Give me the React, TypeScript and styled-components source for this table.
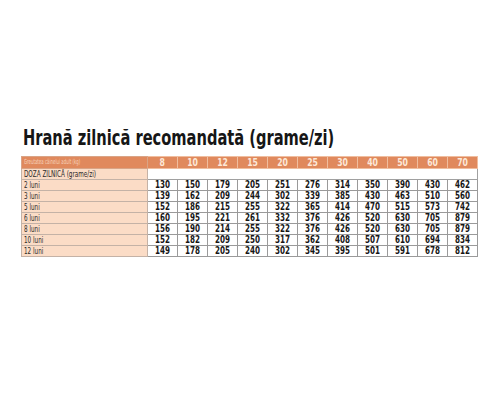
import styled, { createGlobalStyle } from 'styled-components';

const weights = [8, 10, 12, 15, 20, 25, 30, 40, 50, 60, 70];

const rows: { label: string; values: number[] }[] = [
  { label: '2 luni', values: [130, 150, 179, 205, 251, 276, 314, 350, 390, 430, 462] },
  { label: '3 luni', values: [139, 162, 209, 244, 302, 339, 385, 430, 463, 510, 560] },
  { label: '5 luni', values: [152, 186, 215, 255, 322, 365, 414, 470, 515, 573, 742] },
  { label: '6 luni', values: [160, 195, 221, 261, 332, 376, 426, 520, 630, 705, 879] },
  { label: '8 luni', values: [156, 190, 214, 255, 322, 376, 426, 520, 630, 705, 879] },
  { label: '10 luni', values: [152, 182, 209, 250, 317, 362, 408, 507, 610, 694, 834] },
  { label: '12 luni', values: [149, 178, 205, 240, 302, 345, 395, 501, 591, 678, 812] },
];

const GlobalStyle = createGlobalStyle`
  html, body {
    margin: 0;
    padding: 0;
    background: #ffffff;
  }
`;

export default function App() {
  return (
    <Page>
      <GlobalStyle />
      <Title>
        <Squeeze $scale={0.74}>Hrană zilnică recomandată (grame/zi)</Squeeze>
      </Title>
      <Table>
        <colgroup>
          <col style={{ width: 126 }} />
          {weights.map((w) => (
            <col key={w} />
          ))}
        </colgroup>
        <tbody>
          <tr>
            <HeadLabel>
              <Squeeze $scale={0.62}>Greutatea câinelui adult (kg)</Squeeze>
            </HeadLabel>
            {weights.map((w) => (
              <HeadCell key={w}>
                <Squeeze $scale={0.82} $center>
                  {w}
                </Squeeze>
              </HeadCell>
            ))}
          </tr>
          <tr>
            <LabelCell>
              <Squeeze $scale={0.7}>DOZA ZILNICĂ (grame/zi)</Squeeze>
            </LabelCell>
            <EmptyCell colSpan={weights.length} />
          </tr>
          {rows.map((row) => (
            <tr key={row.label}>
              <LabelCell>
                <Squeeze $scale={0.7}>{row.label}</Squeeze>
              </LabelCell>
              {row.values.map((v, i) => (
                <NumCell key={i}>
                  <Squeeze $scale={0.8} $center>
                    {v}
                  </Squeeze>
                </NumCell>
              ))}
            </tr>
          ))}
        </tbody>
      </Table>
    </Page>
  );
}

const Page = styled.div`
  width: 500px;
  height: 400px;
  padding: 126px 0 0 21px;
  box-sizing: border-box;
  font-family: 'Liberation Sans Narrow', 'DejaVu Sans Condensed', 'Liberation Sans', sans-serif;
`;

const Squeeze = styled.span<{ $scale: number; $center?: boolean }>`
  display: inline-block;
  white-space: nowrap;
  transform: scaleX(${(p) => p.$scale});
  transform-origin: ${(p) => (p.$center ? 'center' : 'left')} center;
`;

const Title = styled.h1`
  margin: 0 0 7px 2px;
  font-size: 22px;
  line-height: 23px;
  font-weight: 700;
  color: #161616;
  white-space: nowrap;
`;

const Table = styled.table`
  width: 457px;
  table-layout: fixed;
  border-collapse: collapse;
`;

const HeadLabel = styled.td`
  height: 11px;
  padding: 0 0 0 2px;
  background: #e0895d;
  color: #f7d3bc;
  font-size: 7px;
  line-height: 11px;
  border: 1px solid #d9a486;
  overflow: hidden;
`;

const HeadCell = styled.td`
  height: 11px;
  padding: 0;
  background: #e0895d;
  color: #fde8d8;
  font-size: 10.5px;
  font-weight: 700;
  line-height: 11px;
  text-align: center;
  border: 1px solid #f0bd9e;
`;

const LabelCell = styled.td`
  height: 10px;
  padding: 0 0 0 2px;
  background: #fbdcc6;
  color: #2a2a2a;
  font-size: 9px;
  line-height: 10px;
  border: 1px solid #c4b2a6;
  overflow: hidden;
`;

const EmptyCell = styled.td`
  padding: 0;
  background: #ffffff;
  border: 1px solid #a0a0a0;
`;

const NumCell = styled.td`
  height: 10px;
  padding: 0;
  background: #ffffff;
  color: #161616;
  font-size: 10px;
  font-weight: 700;
  line-height: 10px;
  text-align: center;
  border: 1px solid #9a9a9a;
`;
